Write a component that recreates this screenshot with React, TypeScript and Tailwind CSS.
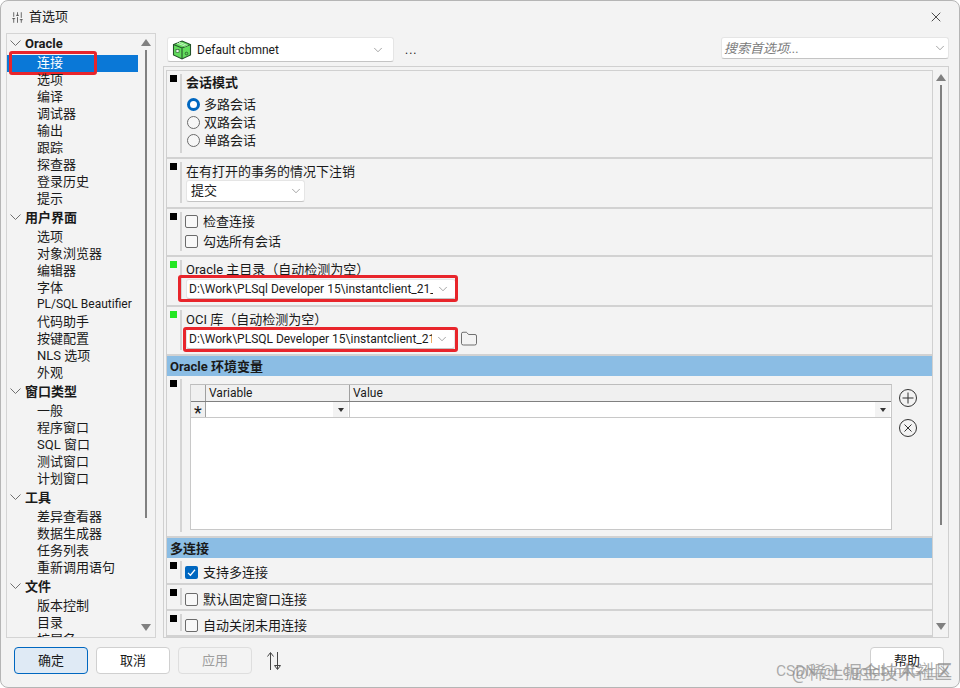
import React from 'react';
import { ChevronDown, Folder, SlidersVertical, X } from 'lucide-react';

type TreeGroup = { title: string; items: string[] };

const tree: TreeGroup[] = [
  { title: 'Oracle', items: ['连接', '选项', '编译', '调试器', '输出', '跟踪', '探查器', '登录历史', '提示'] },
  { title: '用户界面', items: ['选项', '对象浏览器', '编辑器', '字体', 'PL/SQL Beautifier', '代码助手', '按键配置', 'NLS 选项', '外观'] },
  { title: '窗口类型', items: ['一般', '程序窗口', 'SQL 窗口', '测试窗口', '计划窗口'] },
  { title: '工具', items: ['差异查看器', '数据生成器', '任务列表', '重新调用语句'] },
  { title: '文件', items: ['版本控制', '目录', '扩展名'] },
];

const Section = ({ h, green, children }: { h: string; green?: boolean; children: React.ReactNode }) => (
  <div className={`flex shrink-0 border-b-2 border-[#d2d2d2] pt-[3px] pb-1 ${h}`}>
    <div className={`ml-[3px] mt-[1px] size-[7px] shrink-0 ${green ? 'bg-[#22e622]' : 'bg-black'}`} />
    <div className="ml-[3px] w-[2px] shrink-0 bg-[#d4d4d4]" />
    <div className="ml-1 flex min-w-0 flex-1 flex-col">{children}</div>
  </div>
);

const Radio = ({ label, checked }: { label: string; checked?: boolean }) => (
  <div className="flex h-[18px] items-center gap-1">
    {checked ? (
      <span className="ml-px size-[13px] rounded-full border-[3.5px] border-[#0067c0] bg-white" />
    ) : (
      <span className="ml-px size-[13px] rounded-full border border-[#6b6b6b] bg-[#f7f7f7]" />
    )}
    <span>{label}</span>
  </div>
);

const Check = ({ label, checked }: { label: string; checked?: boolean }) => (
  <div className="-ml-px flex h-5 items-center gap-[5px]">
    {checked ? (
      <span className="flex size-[13px] items-center justify-center rounded-[2px] bg-[#0067c0]">
        <svg viewBox="0 0 12 12" className="size-[11px]" fill="none" stroke="white" strokeWidth="1.3">
          <path d="M2.2 6.4 4.8 9l5-6" />
        </svg>
      </span>
    ) : (
      <span className="size-[13px] rounded-[2px] border border-[#6b6b6b] bg-[#f8f8f8]" />
    )}
    <span>{label}</span>
  </div>
);

const Combo = ({ cls, text, italic }: { cls: string; text: string; italic?: boolean }) => (
  <div className={`flex shrink-0 items-center rounded-[3px] border border-[#e5e5e5] border-b-[#c4c4c4] bg-white leading-[15px] ${cls}`}>
    <span className={`min-w-0 flex-1 overflow-hidden whitespace-nowrap ${italic ? 'italic text-[#7a7a7a]' : ''}`}>{text}</span>
    <ChevronDown className="ml-[3px] size-[14px] shrink-0 text-[#666666]" strokeWidth={1} />
  </div>
);

const BlueHeader = ({ title }: { title: string }) => (
  <div className="flex h-5 shrink-0 items-center bg-[#8bbde4] pl-[3px] font-bold">{title}</div>
);

const Arrow = ({ down }: { down?: boolean }) => (
  <span className={`h-0 w-0 shrink-0 border-x-[5px] border-x-transparent ${down ? 'border-t-[7px] border-t-[#808080]' : 'border-b-[7px] border-b-[#808080]'}`} />
);

const GridCaret = () => (
  <span className="flex h-[15px] w-[15px] items-center justify-center bg-[#f3f3f3]">
    <span className="h-0 w-0 border-x-[3px] border-t-[4px] border-x-transparent border-t-[#333333]" />
  </span>
);

const Cube = () => (
  <svg viewBox="0 0 20 20" className="size-5 shrink-0">
    <path d="M10 1 18.5 4.5V15L10 19 1.5 15V4.5Z" fill="#62dc5c" stroke="#24522a" strokeWidth="1.1" />
    <path d="M1.5 4.5 10 8 18.5 4.5M10 8V19" fill="none" stroke="#24522a" strokeWidth="1.1" />
    <path d="M5 3 13.5 6.4M7 2.2 15.5 5.6" stroke="#c6f3c2" strokeWidth="1" />
    <rect x="4" y="9.5" width="3" height="3" fill="#e8fbe8" stroke="#24522a" strokeWidth=".6" />
    <circle cx="14.5" cy="13.5" r="1.3" fill="none" stroke="#24522a" strokeWidth=".8" />
  </svg>
);

const Button = ({ label, variant }: { label: string; variant?: 'primary' | 'disabled' }) => {
  const styles =
    variant === 'primary'
      ? 'border-[#0067c0] bg-[#dfeaf5] text-[#1a1a1a]'
      : variant === 'disabled'
        ? 'border-[#dedede] bg-[#f3f3f3] text-[#9d9d9d]'
        : 'border-[#d0d0d0] bg-white text-[#1a1a1a]';
  return (
    <button className={`flex h-[27px] w-[74px] items-center justify-center rounded-[4px] border ${styles}`}>{label}</button>
  );
};

const App = () => {
  return (
    <div
      className="relative h-[688px] w-[960px] overflow-hidden rounded-lg border border-[#b5b5b5] bg-[#f3f3f3] text-[13px] leading-[17px] text-[#1a1a1a]"
      style={{ fontFamily: 'Roboto, "Noto Sans CJK SC", sans-serif' }}
    >
      {/* title bar */}
      <div className="flex h-8 items-center pl-[10px] pr-[15px]">
        <SlidersVertical className="size-[13px] text-[#333333]" strokeWidth={1.3} />
        <span className="ml-[5px] leading-[15px] pb-[2px]">首选项</span>
        <X className="ml-auto size-[16px] text-[#222222]" strokeWidth={1.2} />
      </div>

      <div className="flex h-[605px] pl-[5px]">
        {/* tree */}
        <div className="flex w-[150px] shrink-0 border border-[#d4d4d4] pr-px">
          <div className="w-[131px] shrink-0 overflow-hidden">
            {tree.map((group) => (
              <div key={group.title}>
                <div className="flex h-[21px] items-center pb-[3px]">
                  <svg viewBox="0 0 11 6" className="ml-[3px] h-[6px] w-[11px] shrink-0" fill="none" stroke="#707070">
                    <path d="M.5.5 5.5 5.5 10.5.5" />
                  </svg>
                  <span className="ml-1 font-bold">{group.title}</span>
                </div>
                {group.items.map((item, i) => {
                  const selected = group.title === 'Oracle' && i === 0;
                  return (
                    <div
                      key={item}
                      className={`relative h-[17px] whitespace-nowrap pl-[30px] leading-[15px] ${selected ? 'bg-[#0a78d7] text-white' : ''} ${item === 'PL/SQL Beautifier' ? 'text-[12px]' : ''}`}
                    >
                      {item}
                      {selected && (
                        <div className="absolute -top-[4px] left-[2px] h-6 w-[88px] rounded-[3px] border-[3px] border-[#e8252b]" />
                      )}
                    </div>
                  );
                })}
              </div>
            ))}
          </div>
          <div className="flex flex-1 flex-col items-center pt-[5px] pb-[6px]">
            <Arrow />
            <div className="mt-[4px] h-[468px] w-[2px] bg-[#808080]" />
            <div className="flex-1" />
            <Arrow down />
          </div>
        </div>

        <div className="ml-[7px] flex w-[786px] shrink-0 flex-col">
          {/* top row */}
          <div className="flex h-[33px] shrink-0 items-start pt-1 pl-1">
            <div className="flex h-[25px] w-[227px] items-center rounded-[3px] border border-[#e5e5e5] border-b-[#c4c4c4] bg-white pl-1 pr-2">
              <Cube />
              <span className="ml-[5px] flex-1 pt-px text-[12px]">Default cbmnet</span>
              <ChevronDown className="size-[14px] text-[#666666]" strokeWidth={1} />
            </div>
            <span className="ml-[11px] mt-[5px] text-[12px] tracking-[1px]">...</span>
            <div className="ml-auto">
              <Combo cls="h-[22px] w-[228px] pl-[2px] pr-[1px]" text="搜索首选项..." italic />
            </div>
          </div>

          {/* settings panel */}
          <div className="flex h-[572px] shrink-0 border border-[#d0d0d0] pt-[3px] pl-[2px]">
            <div className="flex w-[767px] shrink-0 flex-col overflow-hidden border-t border-l border-r border-[#d0d0d0]">
              <Section h="h-[88px]">
                <div className="h-5 font-bold">会话模式</div>
                <div className="mt-[1px]">
                  <Radio label="多路会话" checked />
                  <Radio label="双路会话" />
                  <Radio label="单路会话" />
                </div>
              </Section>
              <Section h="h-[50px]">
                <div className="mt-[1px] h-[17px]">在有打开的事务的情况下注销</div>
                <Combo cls="h-[22px] w-[119px] pl-1 pr-[1px] pb-px" text="提交" />
              </Section>
              <Section h="h-[48px]">
                <Check label="检查连接" />
                <Check label="勾选所有会话" />
              </Section>
              <Section h="h-[50px]" green>
                <div className="mt-[1px] h-[17px]">Oracle 主目录（自动检测为空）</div>
                <div className="relative mt-[1px] w-[270px]">
                  <Combo cls="h-5 w-[270px] pl-[2px] pr-[5px] text-[12px]" text="D:\Work\PLSql Developer 15\instantclient_21_1" />
                  <div className="absolute -top-[4px] -bottom-[3px] -left-[8px] -right-[2px] rounded-[3px] border-[3px] border-[#e8252b]" />
                </div>
              </Section>
              <Section h="h-[49px]" green>
                <div className="mt-[1px] h-[17px]">OCI 库（自动检测为空）</div>
                <div className="mt-[1px] flex items-center">
                  <div className="relative w-[269px]">
                    <Combo cls="h-5 w-[269px] pl-[2px] pr-[5px] text-[12px]" text="D:\Work\PLSQL Developer 15\instantclient_21_" />
                    <div className="absolute -top-[2px] -bottom-[3px] -inset-x-[3px] rounded-[3px] border-[3px] border-[#e8252b]" />
                  </div>
                  <Folder className="ml-[5px] size-[18px] text-[#444444]" strokeWidth={1} />
                </div>
              </Section>
              <BlueHeader title="Oracle 环境变量" />
              <Section h="h-[162px]">
                <div className="flex items-start pl-1 pt-[5px]">
                  <div className="h-[146px] w-[702px] shrink-0 border border-[#c8c8c8] border-t-[#bdbdbd] bg-white text-[12px]">
                    <div className="flex h-[17px] border-b border-[#808080] bg-[#f0f0f0]">
                      <div className="w-[15px] border-r border-[#a0a0a0]" />
                      <div className="w-[144px] border-r border-[#a0a0a0] pl-[3px]">Variable</div>
                      <div className="pl-[3px]">Value</div>
                    </div>
                    <div className="flex h-4 border-b border-[#c8c8c8]">
                      <div className="flex w-[15px] items-center justify-center border-r border-[#a0a0a0] bg-[#f0f0f0] pt-[7px] text-[18px] leading-none">*</div>
                      <div className="flex w-[144px] items-center justify-end border-r border-[#c8c8c8] pr-px">
                        <GridCaret />
                      </div>
                      <div className="flex flex-1 items-center justify-end pr-px">
                        <GridCaret />
                      </div>
                    </div>
                  </div>
                  <div className="ml-[7px] mt-[5px] flex flex-col gap-3">
                    <svg viewBox="0 0 18 18" className="size-[18px]" fill="none" stroke="#333333">
                      <circle cx="9" cy="9" r="8.5" />
                      <path d="M9 3.5v11M3.5 9h11" />
                    </svg>
                    <svg viewBox="0 0 18 18" className="size-[18px]" fill="none" stroke="#333333">
                      <circle cx="9" cy="9" r="8.5" />
                      <path d="m5.5 5.5 7 7M12.5 5.5l-7 7" />
                    </svg>
                  </div>
                </div>
              </Section>
              <BlueHeader title="多连接" />
              <Section h="h-[27px]">
                <div className="mt-[1px]">
                  <Check label="支持多连接" checked />
                </div>
              </Section>
              <Section h="h-[26px]">
                <div className="mt-px">
                  <Check label="默认固定窗口连接" />
                </div>
              </Section>
              <Section h="h-[26px]">
                <div className="mt-px">
                  <Check label="自动关闭未用连接" />
                </div>
              </Section>
            </div>
            <div className="flex flex-1 flex-col items-center pt-[4px] pb-[7px] pl-px">
              <Arrow />
              <div className="mt-[4px] h-[440px] w-[2px] bg-[#808080]" />
              <div className="flex-1" />
              <Arrow down />
            </div>
          </div>
        </div>
      </div>

      {/* buttons */}
      <div className="flex items-center pt-[9px] pl-[13px]">
        <div className="flex gap-2">
          <Button label="确定" variant="primary" />
          <Button label="取消" />
          <Button label="应用" variant="disabled" />
        </div>
        <svg viewBox="0 0 16 20" className="ml-[14px] h-5 w-4" fill="none" stroke="#444444" strokeWidth="1">
          <path d="M4.5 19V2M1.5 5.5 4.5 1.5l3 4" />
          <path d="M11.5 1v17M8.5 14.5h6l-3 4z" />
        </svg>
        <div className="ml-auto mr-[15px]">
          <Button label="帮助" />
        </div>
      </div>

      {/* watermark */}
      <div className="absolute bottom-[7px] right-[7px] whitespace-nowrap text-[15.5px] text-[#8a8a8a]/70">CSDN @Lcgoldbin4G社区</div>
      <div className="absolute bottom-[6px] right-[7px] whitespace-nowrap text-[18px] text-[#8a8a8a]/70">@稀土掘金技术社区</div>
    </div>
  );
};

export default App;
